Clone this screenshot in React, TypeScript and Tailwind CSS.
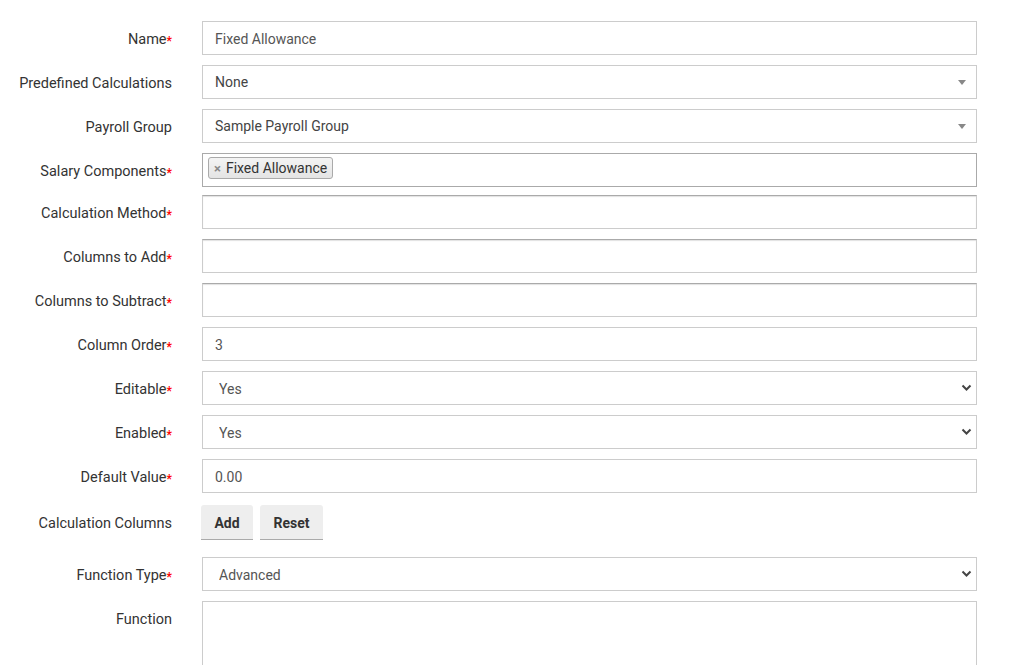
import React from 'react'

const font = { fontFamily: 'Roboto, "Liberation Sans", sans-serif' }

function Label({ text, req }: { text: string; req?: boolean }) {
    return (
        <div className="w-[172px] shrink-0 h-[34px] pt-[4px] flex justify-end items-center text-[14.5px] text-[#333]">
            <span>{text}</span>
            {req && <span className="text-[#f00] text-[12px] font-bold relative top-[1px]">*</span>}
        </div>
    )
}

function Row({ children, label, req, mb = 'mb-[10px]' }: { children: React.ReactNode; label: string; req?: boolean; mb?: string }) {
    return (
        <div className={`flex items-start gap-[30px] ${mb}`}>
            <Label text={label} req={req} />
            <div className="w-[775px]">{children}</div>
        </div>
    )
}

function TextInput({ value, shadow }: { value?: string; shadow?: boolean }) {
    return (
        <input
            readOnly
            value={value ?? ''}
            className={`w-full h-[34px] border border-[#ccc] px-3 pt-[2px] text-[14px] text-[#555] outline-none bg-white ${shadow ? 'shadow-[inset_0_1px_1px_rgba(0,0,0,0.12)] border-t-[#aaa]' : ''}`}
        />
    )
}

function Select2({ value }: { value: string }) {
    return (
        <div className="w-full h-[34px] border border-[#ccc] bg-white flex items-center justify-between pl-3 pr-[10px] text-[14px] text-[#444]">
            <span>{value}</span>
            <svg width="8" height="5" viewBox="0 0 8 5"><path d="M0 0h8L4 5z" fill="#888" /></svg>
        </div>
    )
}

function NativeSelect({ value }: { value: string }) {
    return (
        <div className="relative w-full">
            <select defaultValue={value} className="w-full h-[34px] border border-[#ccc] bg-white pl-4 pr-8 pt-[3px] text-[14px] text-[#555] appearance-none outline-none">
                <option>{value}</option>
            </select>
            <svg className="absolute right-[5px] top-[13px]" width="11" height="8" viewBox="0 0 11 8">
                <path d="M1.5 1.5l4 4 4-4" stroke="#444" strokeWidth="2" fill="none" />
            </svg>
        </div>
    )
}

export default function App(): React.ReactElement {
    return (
        <div className="w-[1020px] h-[665px] overflow-hidden bg-white pt-[21px]" style={font}>
            <Row label="Name" req><TextInput value="Fixed Allowance" /></Row>
            <Row label="Predefined Calculations"><Select2 value="None" /></Row>
            <Row label="Payroll Group"><Select2 value="Sample Payroll Group" /></Row>
            <Row label="Salary Components" req mb="mb-[8px]">
                <div className="w-full h-[34px] border border-[#aaa] bg-white flex items-start pt-[3px] px-[5px]">
                    <span className="flex items-center gap-[5px] h-[22px] px-[5px] border border-[#aaa] rounded-[3px] bg-gradient-to-b from-[#f4f4f4] to-[#e4e4e4] text-[14px] text-[#333]">
                        <span className="text-[#888] text-[13px] font-bold leading-none">×</span>
                        Fixed Allowance
                    </span>
                </div>
            </Row>
            <Row label="Calculation Method" req><TextInput shadow /></Row>
            <Row label="Columns to Add" req><TextInput shadow /></Row>
            <Row label="Columns to Subtract" req><TextInput shadow /></Row>
            <Row label="Column Order" req><TextInput value="3" /></Row>
            <Row label="Editable" req><NativeSelect value="Yes" /></Row>
            <Row label="Enabled" req><NativeSelect value="Yes" /></Row>
            <Row label="Default Value" req mb="mb-[12px]"><TextInput value="0.00" /></Row>
            <Row label="Calculation Columns" mb="mb-[16px]">
                <div className="flex gap-[7px] h-[36px] items-start">
                    <button className="h-[35px] w-[52px] -ml-[1px] pt-[3px] bg-[#eee] border-b border-[#aaa] rounded-t-[3px] text-[14px] font-bold text-[#333]">Add</button>
                    <button className="h-[35px] w-[63px] pt-[3px] bg-[#eee] border-b border-[#aaa] rounded-t-[3px] text-[14px] font-bold text-[#333]">Reset</button>
                </div>
            </Row>
            <Row label="Function Type" req><NativeSelect value="Advanced" /></Row>
            <Row label="Function">
                <textarea readOnly className="w-full h-[120px] border border-[#ccc] resize-none outline-none" />
            </Row>
        </div>
    )
}
